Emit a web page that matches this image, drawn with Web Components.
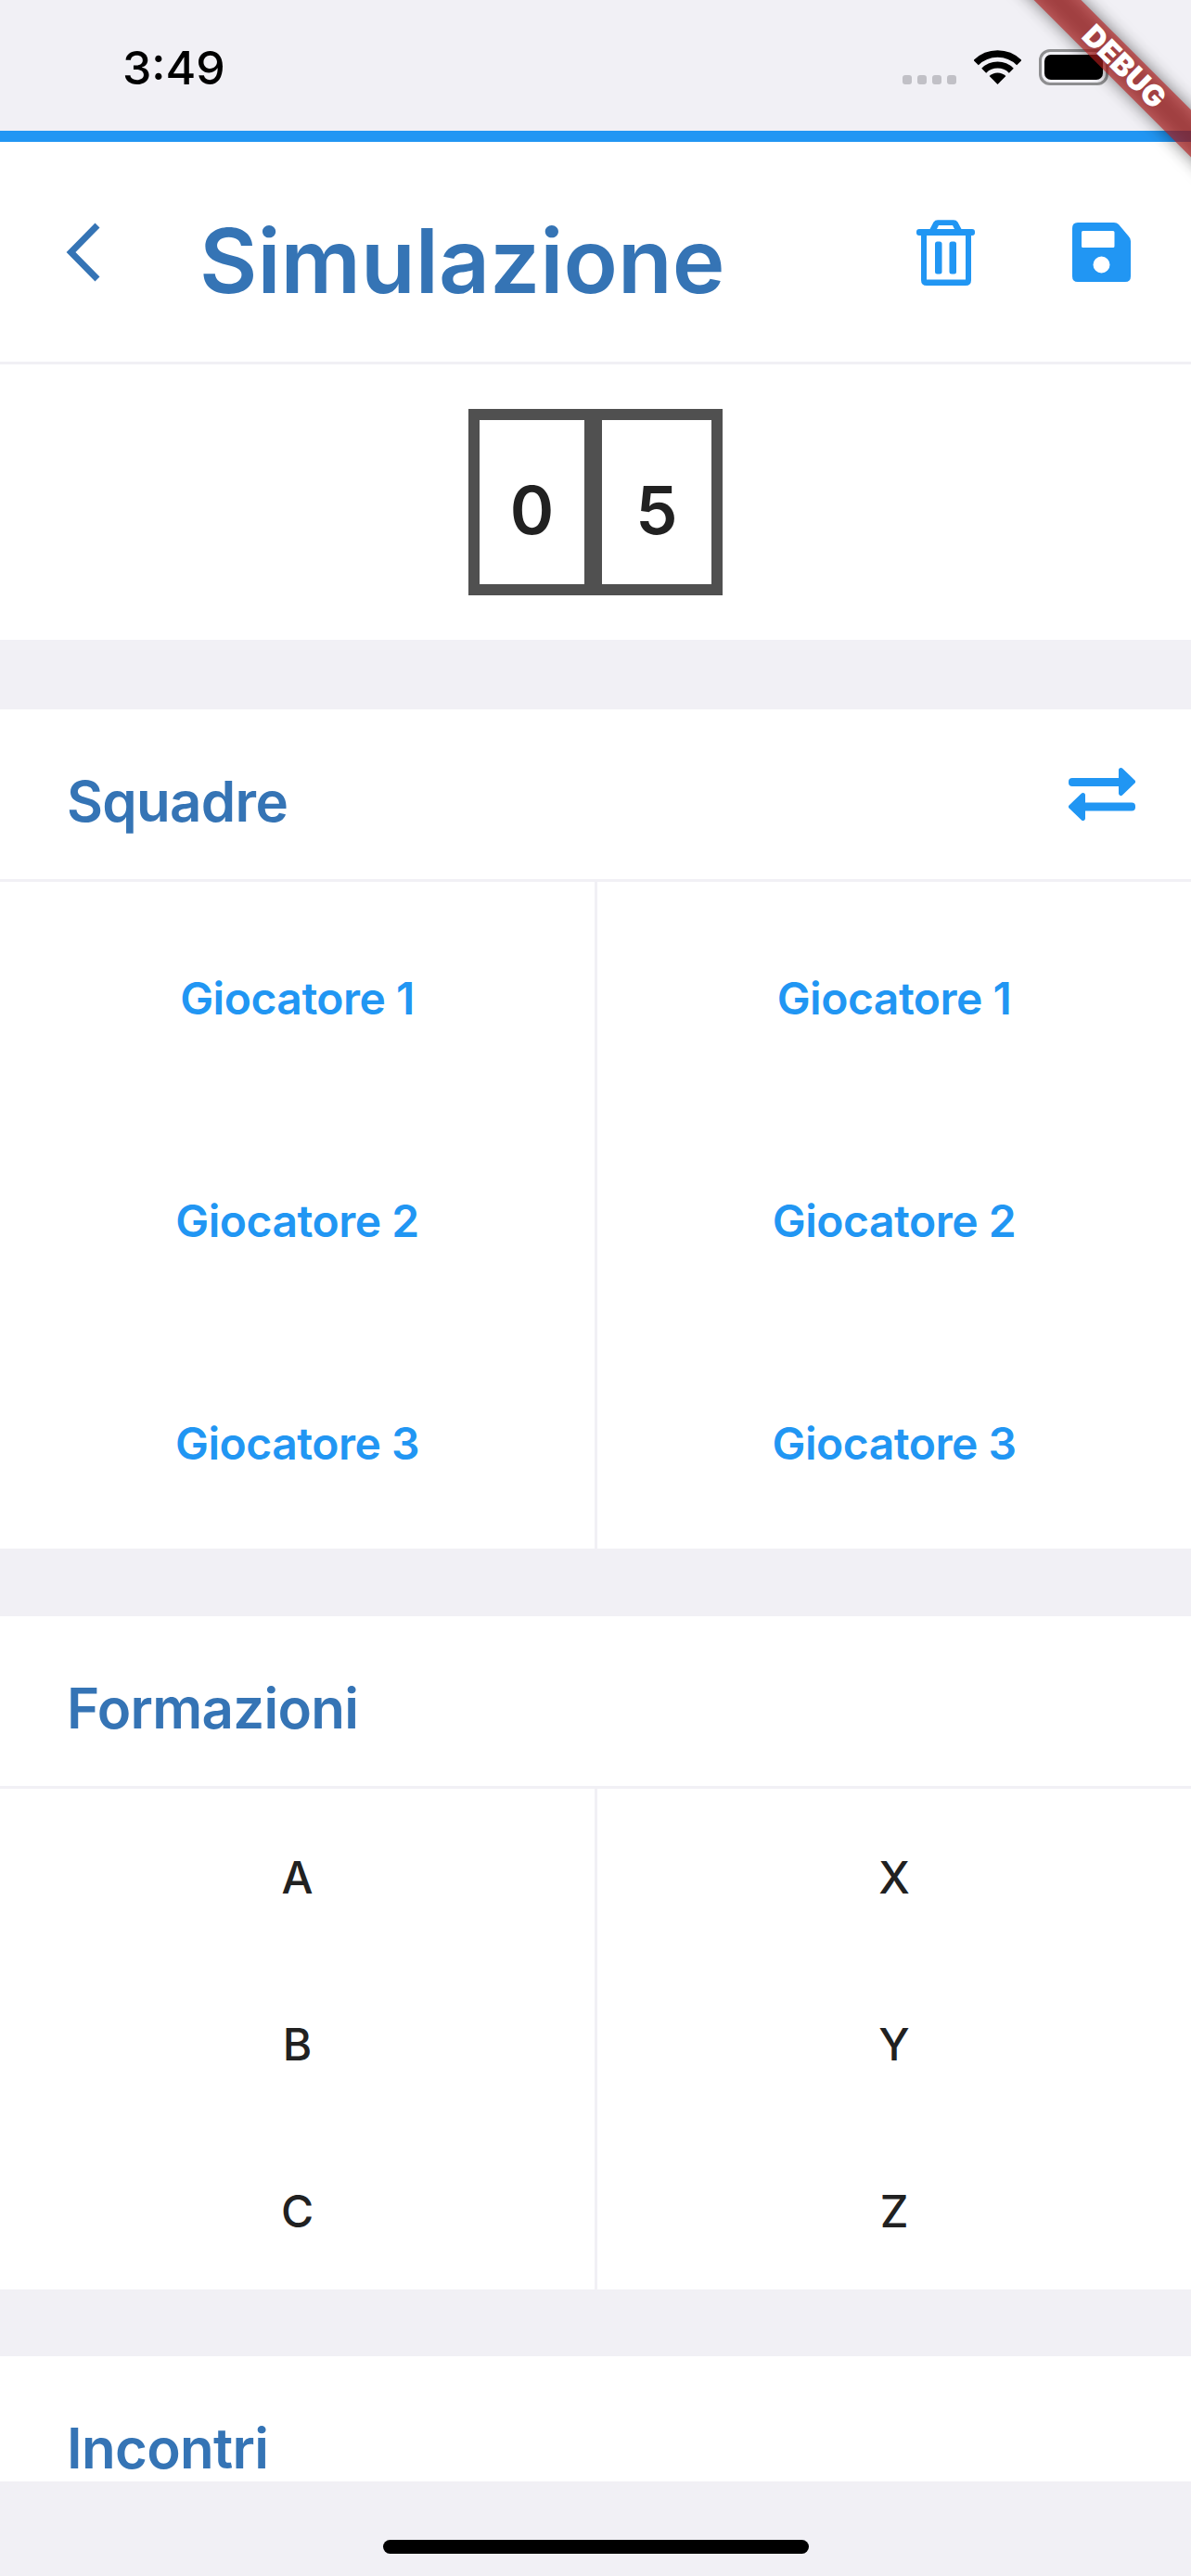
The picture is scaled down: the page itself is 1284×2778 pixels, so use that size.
<!DOCTYPE html>
<html lang="it">
<head>
<meta charset="utf-8">
<title>Simulazione</title>
<style>
  html, body { margin: 0; height: 100%; }
  body {
    display: flex;
    flex-direction: column;
    width: 1284px;
    height: 2778px;
    overflow: hidden;
    position: relative;
    background: #f1f0f5;
    font-family: Inter, "Liberation Sans", sans-serif;
  }
  main-scroll { flex: 1; }
</style>
</head>
<body>
  <status-bar time="3:49"></status-bar>
  <app-bar title="Simulazione"></app-bar>
  <main-scroll>
    <score-box home="0" away="5"></score-box>
    <section-card heading="Squadre" style="margin-top:75px">
      <swap-icon slot="action"></swap-icon>
      <pick-grid kind="player" left="Giocatore 1|Giocatore 2|Giocatore 3" right="Giocatore 1|Giocatore 2|Giocatore 3"></pick-grid>
    </section-card>
    <section-card heading="Formazioni" style="margin-top:73px">
      <pick-grid kind="formation" left="A|B|C" right="X|Y|Z"></pick-grid>
    </section-card>
    <section-card heading="Incontri" style="margin-top:72px"></section-card>
  </main-scroll>
  <home-indicator></home-indicator>
  <debug-banner></debug-banner>

<script>
const FONT = `font-family: Inter, "Liberation Sans", sans-serif;`;

class StatusBar extends HTMLElement {
  constructor() {
    super();
    this.attachShadow({ mode: 'open' }).innerHTML = `
      <style>
        :host { display: flex; align-items: flex-start; height: 141px; flex: none; background: #f1f0f5; color: #000; }
        .time { margin: 43px 0 0 132px; ${FONT} font-weight: 500; font-size: 50px; line-height: 60px; }
        .right { margin-left: auto; display: flex; align-items: flex-start; padding: 53px 89px 0 0; }
        .dots { display: flex; gap: 6px; margin: 28px 19px 0 0; }
        .dots i { width: 10px; height: 10px; border-radius: 3px; background: #c1c0c6; }
        svg { display: block; width: 51px; height: 37px; margin: 1px 19px 0 0; }
        .battery { box-sizing: border-box; width: 75px; height: 39px; border: 3px solid #8e8e90; border-radius: 12px; padding: 3px; }
        .battery b { display: block; height: 100%; background: #000; border-radius: 7px; }
      </style>
      <span class="time">${this.getAttribute('time')}</span>
      <div class="right">
        <div class="dots"><i></i><i></i><i></i><i></i></div>
        <svg viewBox="0 0 51 37">
          <path d="M2.2 13.7A33 33 0 0 1 48.8 13.7" fill="none" stroke="#000" stroke-width="7.5"/>
          <path d="M10.7 22.2A21 21 0 0 1 40.3 22.2" fill="none" stroke="#000" stroke-width="7"/>
          <path d="M25.5 37L16.6 28.1A12.6 12.6 0 0 1 34.4 28.1Z" fill="#000"/>
        </svg>
        <div class="battery"><b></b></div>
      </div>`;
  }
}

class AppBar extends HTMLElement {
  constructor() {
    super();
    this.attachShadow({ mode: 'open' }).innerHTML = `
      <style>
        :host { display: flex; align-items: center; flex: none; height: 237px; border-top: 12px solid #2196f3; border-bottom: 3px solid #f1f0f5; background: #fff; }
        svg { display: block; flex: none; }
        .back { margin-left: 70px; width: 40px; height: 64px; }
        h1 { margin: 18px 0 0 105px; ${FONT} font-weight: 600; font-size: 96px; letter-spacing: 0; line-height: 116px; color: #3574b5; flex: 1; white-space: nowrap; }
        .trash { width: 63px; height: 72px; margin-right: 105px; }
        .save { width: 63px; height: 64px; margin-right: 65px; }
      </style>
      <svg class="back" viewBox="0 0 40 64">
        <path d="M35 3L6.500 32L35 61" fill="none" stroke="#3574b5" stroke-width="7"/>
      </svg>
      <h1>${this.getAttribute('title')}</h1>
      <svg class="trash" viewBox="0 0 63 72" fill="#2196f3">
        <path d="M14 12L18.500 3.500Q20 1.200 23 1.200H40Q43 1.200 44.500 3.500L49 12H41.500L39 7H24L21.500 12Z" />
        <rect x="0" y="11" width="63" height="7" rx="3"/>
        <path fill-rule="evenodd" d="M5 16H59V66Q59 72 53 72H11Q5 72 5 66ZM11 16V65.500H53V16Z"/>
        <rect x="20" y="24.500" width="7.500" height="35" rx="2.500"/>
        <rect x="35.500" y="24.500" width="7.500" height="35" rx="2.500"/>
      </svg>
      <svg class="save" viewBox="0 0 63 64">
        <path fill="#2196f3" fill-rule="evenodd" d="M6 0H45Q48 0 50 2L60.500 14.500Q63 17 63 20V58Q63 64 57 64H6Q0 64 0 58V6Q0 0 6 0ZM11.500 9Q10 9 10 10.500V25.500Q10 27 11.500 27H44Q45.500 27 45.500 25.500V10.500Q45.500 9 44 9ZM31.500 36.500A9 9 0 1 0 31.500 54.500A9 9 0 1 0 31.500 36.500Z"/>
      </svg>`;
  }
}

class ScoreBox extends HTMLElement {
  constructor() {
    super();
    this.attachShadow({ mode: 'open' }).innerHTML = `
      <style>
        :host { display: flex; justify-content: center; padding: 48px 0; background: #fff; }
        .cell { box-sizing: border-box; width: 137px; height: 201px; padding-top: 17px; border: 12px solid #505050; display: flex; align-items: center; justify-content: center; ${FONT} font-weight: 600; font-size: 72px; line-height: 1; color: #212121; }
        .cell:first-child { border-right-width: 8px; }
        .cell:last-child { border-left-width: 7px; }
      </style>
      <div class="cell">${this.getAttribute('home')}</div>
      <div class="cell">${this.getAttribute('away')}</div>`;
  }
}

class SectionCard extends HTMLElement {
  constructor() {
    super();
    this.attachShadow({ mode: 'open' }).innerHTML = `
      <style>
        :host { display: block; background: #fff; }
        header { display: flex; align-items: center; height: 183px; box-sizing: border-box; padding: 0 60px 0 72px; }
        h2 { flex: 1; margin: 15px 0 0; ${FONT} font-weight: 600; font-size: 60px; letter-spacing: -0.7px; line-height: 72px; color: #3574b5; }
        .line { height: 3px; background: #f1f0f5; }
      </style>
      <header><h2>${this.getAttribute('heading')}</h2><slot name="action"></slot></header>
      <div class="line"></div>
      <slot></slot>`;
  }
}

class SwapIcon extends HTMLElement {
  constructor() {
    super();
    this.attachShadow({ mode: 'open' }).innerHTML = `
      <style>
        :host { display: block; width: 72px; height: 57px; }
        svg { display: block; width: 100%; height: 100%; }
      </style>
      <svg viewBox="0 0 72 57" fill="#2196f3" stroke="#2196f3" stroke-linejoin="round">
        <rect x="0" y="11" width="62" height="9" rx="4" stroke="none"/>
        <path d="M56.500 2.500L69.500 15L56.500 27.500Z" stroke-width="5"/>
        <rect x="10" y="37.500" width="62" height="9" rx="4" stroke="none"/>
        <path d="M15.500 29.500L2.500 42L15.500 54.500Z" stroke-width="5"/>
      </svg>`;
  }
}

class PickGrid extends HTMLElement {
  constructor() {
    super();
    const col = (name) => this.getAttribute(name).split('|').map(t => `<span>${t}</span>`).join('');
    this.attachShadow({ mode: 'open' }).innerHTML = `
      <style>
        :host { display: grid; grid-template-columns: 641px 3px 640px; background: #fff; }
        .col { display: flex; flex-direction: column; align-items: center; ${FONT} font-weight: 500; font-size: 48px; line-height: 60px; }
        .divider { background: #f1f0f5; }
        :host([kind="player"]) .col { padding: 96px 0 83px; gap: 180px; color: #2196f3; font-weight: 600; letter-spacing: -0.5px; }
        :host([kind="formation"]) .col { padding: 66px 0 54px; gap: 120px; color: #212121; }
      </style>
      <div class="col">${col('left')}</div>
      <div class="divider"></div>
      <div class="col">${col('right')}</div>`;
  }
}

class MainScroll extends HTMLElement {
  constructor() {
    super();
    this.attachShadow({ mode: 'open' }).innerHTML = `
      <style>
        :host { display: block; overflow: hidden; min-height: 0; }
      </style>
      <slot></slot>`;
  }
}

class HomeIndicator extends HTMLElement {
  constructor() {
    super();
    this.attachShadow({ mode: 'open' }).innerHTML = `
      <style>
        :host { display: flex; justify-content: center; flex: none; height: 102px; background: #f1f0f5; }
        i { width: 459px; height: 15px; margin-top: 63px; border-radius: 8px; background: #000; }
      </style>
      <i></i>`;
  }
}

class DebugBanner extends HTMLElement {
  constructor() {
    super();
    this.attachShadow({ mode: 'open' }).innerHTML = `
      <style>
        :host { position: absolute; inset: 0; overflow: hidden; pointer-events: none; display: block; }
        .wrap { position: absolute; left: 1040px; top: 54px; width: 344px; height: 36px; transform: rotate(45deg); }
        .shadow { position: absolute; inset: 0; background: rgba(0,0,0,.5); filter: blur(9px); }
        .band { position: absolute; inset: 0; background: rgba(183,28,28,.627); color: #fff; ${FONT} font-weight: 900; font-size: 32px; line-height: 36px; text-align: center; }
      </style>
      <div class="wrap"><div class="shadow"></div><div class="band">DEBUG</div></div>`;
  }
}

customElements.define('status-bar', StatusBar);
customElements.define('app-bar', AppBar);
customElements.define('score-box', ScoreBox);
customElements.define('section-card', SectionCard);
customElements.define('swap-icon', SwapIcon);
customElements.define('pick-grid', PickGrid);
customElements.define('main-scroll', MainScroll);
customElements.define('home-indicator', HomeIndicator);
customElements.define('debug-banner', DebugBanner);
</script>
</body>
</html>
